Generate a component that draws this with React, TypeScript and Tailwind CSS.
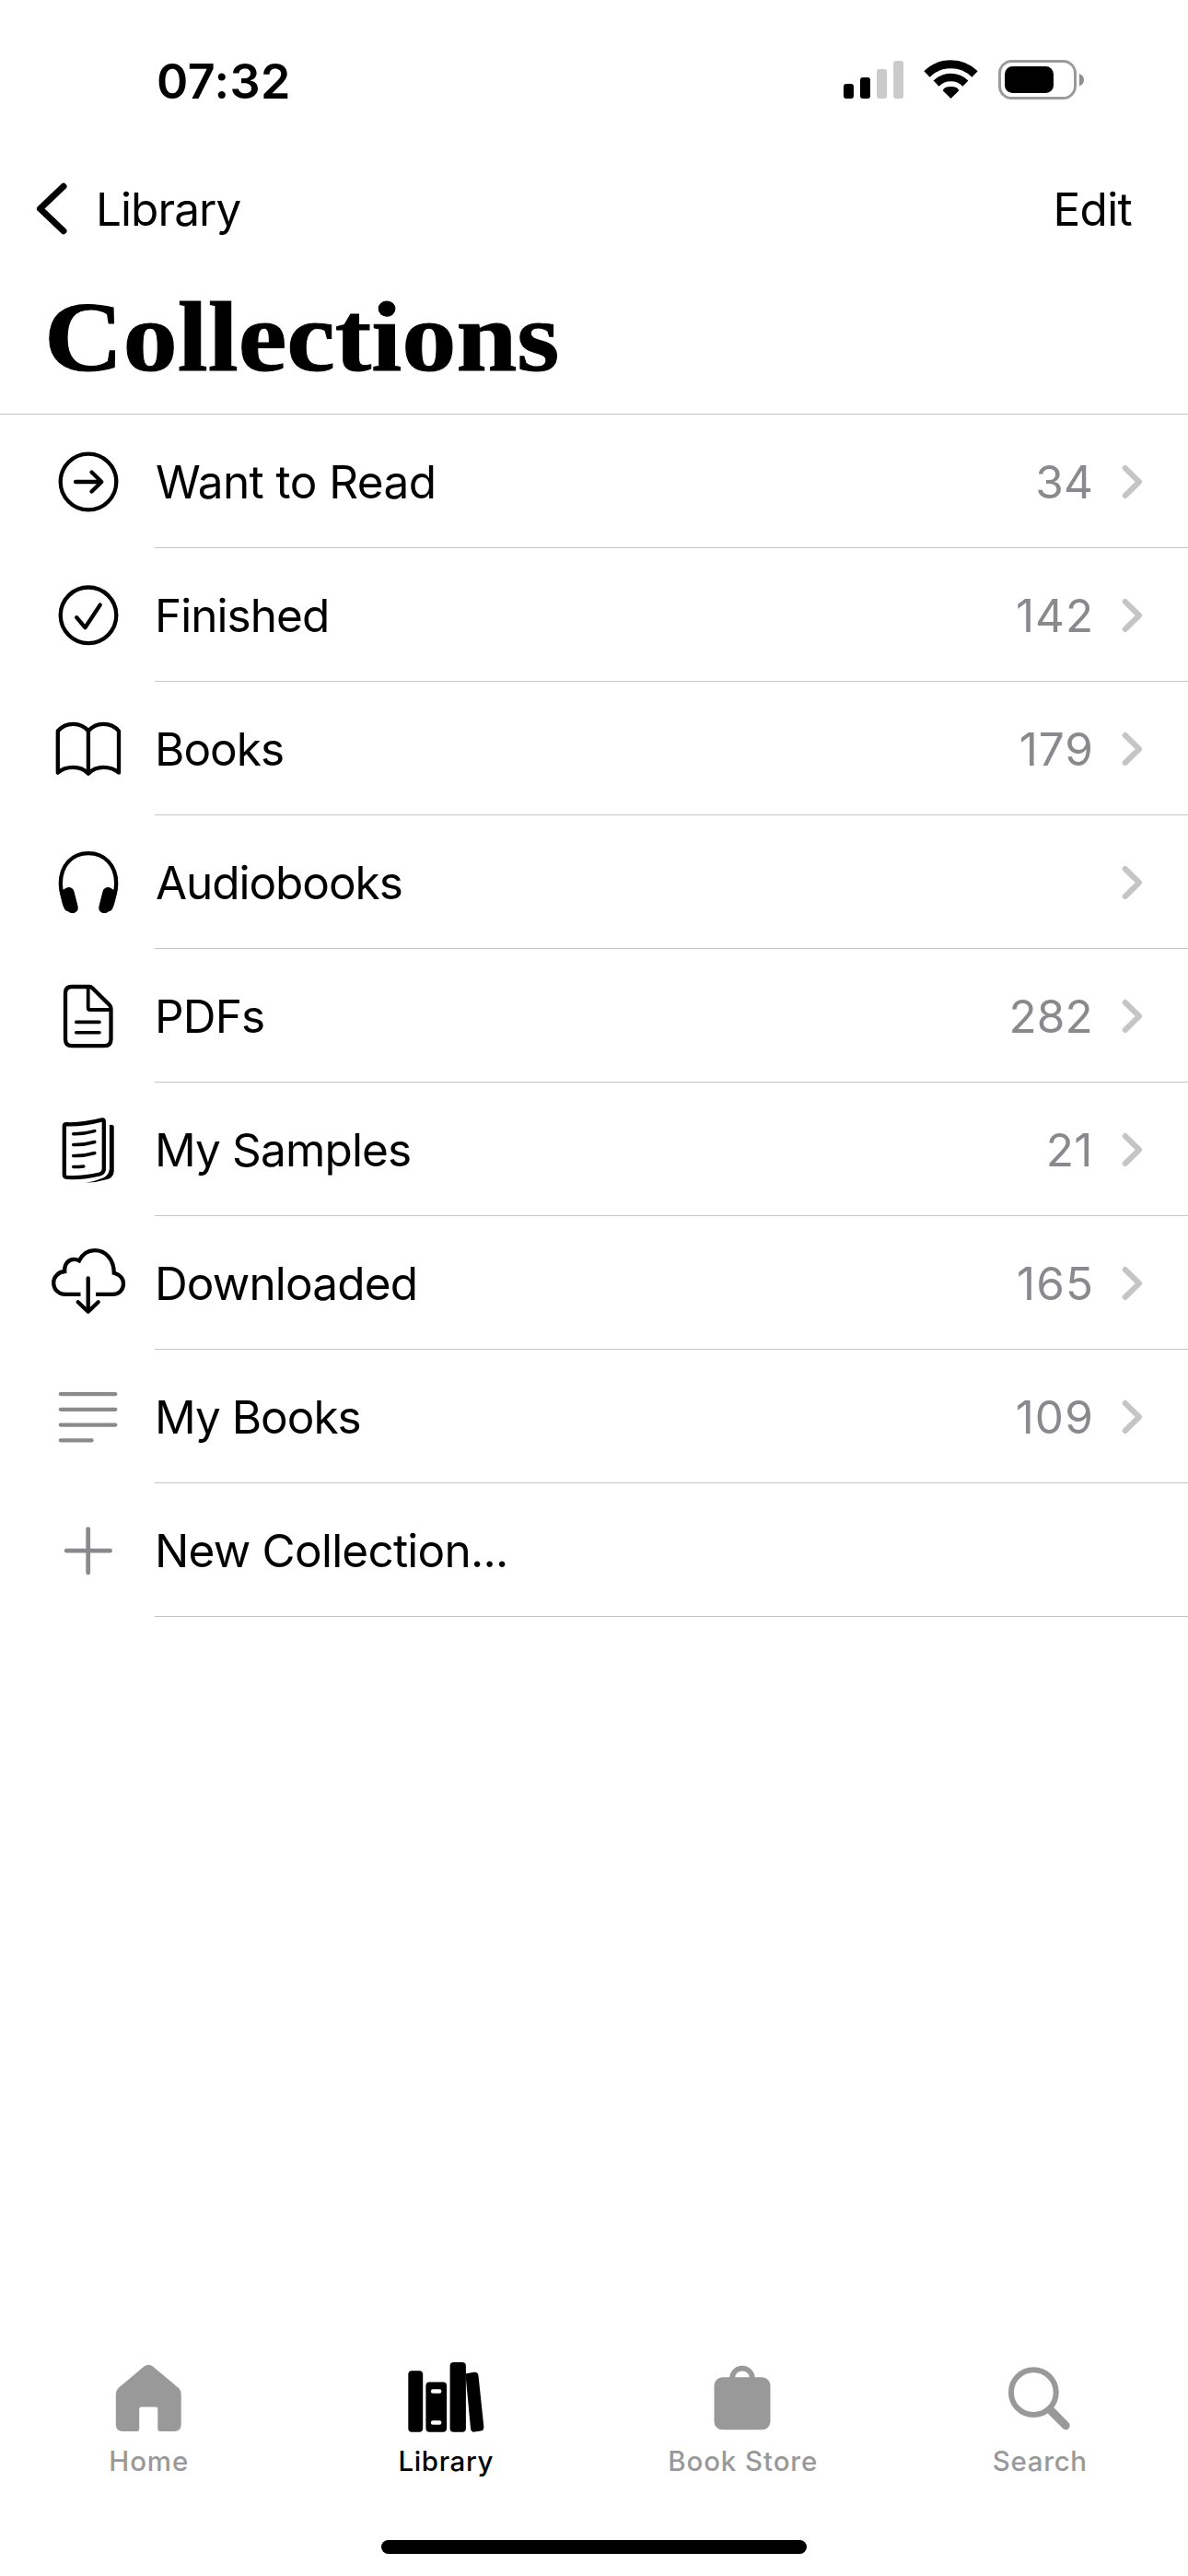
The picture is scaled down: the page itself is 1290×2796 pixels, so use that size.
import type { ReactNode } from "react";

type Row = {
  label: string;
  spacing: string;
  indent: string;
  count?: string;
  countSpacing?: string;
  chevron?: boolean;
  icon: ReactNode;
};

const Stroke = ({ children, color = "#000", width = 4.3 }: { children: ReactNode; color?: string; width?: number }) => (
  <svg
    className="h-[145px] w-[168px] shrink-0"
    viewBox="0 0 168 145"
    fill="none"
    stroke={color}
    strokeWidth={width}
    strokeLinecap="round"
    strokeLinejoin="round"
  >
    {children}
  </svg>
);

const rows: Row[] = [
  {
    label: "Want to Read",
    spacing: "tracking-[-0.57px]",
    indent: "pl-[1px]",
    count: "34",
    countSpacing: "tracking-[0.1px] mr-[1px]",
    chevron: true,
    icon: (
      <Stroke>
        <circle cx="96" cy="73" r="30.3" />
        <path d="M82 73H110M99.5 62.5L110.3 73L99.5 83.5" />
      </Stroke>
    ),
  },
  {
    label: "Finished",
    spacing: "tracking-[-0.96px]",
    indent: "pl-0",
    count: "142",
    countSpacing: "tracking-[0.9px]",
    chevron: true,
    icon: (
      <Stroke>
        <circle cx="96" cy="72.8" r="30.3" />
        <path d="M83.2 75.2L92.4 86.2L108.7 61.6" />
      </Stroke>
    ),
  },
  {
    label: "Books",
    spacing: "tracking-[-0.98px]",
    indent: "pl-0",
    count: "179",
    countSpacing: "tracking-[1px]",
    chevron: true,
    icon: (
      <Stroke>
        <path d="M62.8 98.7V53.5C67 48.6 73 45.8 79.5 45.8S92 48.6 95.9 53.5C100 48.6 105.5 45.8 112.3 45.8S125 48.6 129 53.5V98.7C124.5 95 119 92.9 112.3 92.9S100 95.5 95.9 99.7C92 95.5 86 92.9 79.5 92.9S67 95 62.8 98.7ZM95.9 53.5V99.7" />
      </Stroke>
    ),
  },
  {
    label: "Audiobooks",
    spacing: "tracking-[-1.06px]",
    indent: "pl-[1px]",
    chevron: true,
    icon: (
      <Stroke>
        <path d="M68 88C66.600 83.500 65.800 79 65.800 74C65.800 54 78.500 41.200 96 41.200S126.200 54 126.200 74C126.200 79 125.400 83.500 124 88" />
        <path
          fill="#000"
          stroke="none"
          d="M65.500 80L69.500 80.500C71 79 73 78 75.200 78.100C78 78.300 79.700 80 80.500 82.800L84.500 98.500C85.400 102.500 83.500 105.300 80 106C77.500 106.400 75.500 105.600 74 104.200C72.500 104.200 71 103.300 70 101.500C67.500 96.500 65.500 89 65.500 80ZM126.500 80L122.500 80.500C121 79 119 78 116.800 78.100C114 78.300 112.300 80 111.500 82.800L107.500 98.500C106.600 102.500 108.500 105.300 112 106C114.500 106.400 116.500 105.600 118 104.200C119.500 104.200 121 103.300 122 101.500C124.500 96.500 126.500 89 126.500 80Z"
        />
      </Stroke>
    ),
  },
  {
    label: "PDFs",
    spacing: "tracking-[-0.85px]",
    indent: "pl-0",
    count: "282",
    countSpacing: "tracking-[0.2px] mr-[1px]",
    chevron: true,
    icon: (
      <Stroke>
        <path d="M78 41H97Q99 41 100.400 42.400L118.800 60.800Q120.500 62.500 120.500 65V98Q120.500 105.200 113.500 105.200H78Q71 105.200 71 98V48Q71 41 78 41Z" />
        <path strokeWidth="3.800" d="M95.700 42V64Q95.700 66 97.700 66H119.500" />
        <path strokeWidth="3.600" d="M82.800 79.400H108M82.800 90.700H108" />
      </Stroke>
    ),
  },
  {
    label: "My Samples",
    spacing: "tracking-[-0.86px]",
    indent: "pl-0",
    count: "21",
    countSpacing: "tracking-[0.5px] mr-[1px]",
    chevron: true,
    icon: (
      <Stroke>
        <path d="M72 45.200Q90 46 111 40.400Q112.800 40 112.800 42V94Q112.800 98 108 99.500Q91 103.800 72.500 102.900Q69.800 102.700 69.800 100V47.500Q69.800 45.200 72 45.200Z" />
        <path strokeWidth="3.500" d="M79.700 55.700Q91 56 102.800 52.600M79.700 67.600Q91 67.900 102.800 64.500M79.700 79.600Q91 79.900 102.800 76.500M79.700 91.600Q86 91.600 90.800 90.900" />
        <path
          fill="#000"
          stroke="none"
          d="M118.900 46.300Q119.200 45.700 120.500 45.700Q123.700 45.900 123.700 48V96Q123.500 102.500 117.500 104.800Q106 108.300 93.300 108.800Q103.500 107.300 112.500 103.300Q118.900 100 118.900 92Z"
        />
      </Stroke>
    ),
  },
  {
    label: "Downloaded",
    spacing: "tracking-[-0.85px]",
    indent: "pl-0",
    count: "165",
    countSpacing: "tracking-[1px]",
    chevron: true,
    icon: (
      <Stroke>
        <path
          strokeLinecap="butt"
          strokeLinejoin="miter"
          d="M87.500 84.900H71C63.500 84.900 58.200 79.500 58.200 72.300C58.200 65.800 63.300 60.500 70.200 60C69.800 51.500 74.500 46.900 80.500 46.900C82.500 46.900 84 47.300 86 48.300C89.500 41.200 95.500 37.100 102.800 37.100C114.500 37.100 123.600 46.500 123.800 61.700C130 63.200 134 67.700 134 73.500C134 80.200 128.800 84.900 122.500 84.900H104"
        />
        <path d="M95.700 67.300V103M84.700 93.200L95.700 103.700L106.700 93.200" />
      </Stroke>
    ),
  },
  {
    label: "My Books",
    spacing: "tracking-[-1px]",
    indent: "pl-0",
    count: "109",
    countSpacing: "tracking-[1.1px]",
    chevron: true,
    icon: (
      <Stroke color="#8a8a8e">
        <path d="M65.800 48.100H125.300M65.800 64.800H125.300M65.800 81.600H125.300M65.800 98.300H99.600" />
      </Stroke>
    ),
  },
  {
    label: "New Collection...",
    spacing: "tracking-[-0.77px]",
    indent: "pl-0",
    icon: (
      <Stroke color="#8a8a8e" width={4.8}>
        <path d="M72.200 73.200H119.500M95.700 49.600V97" />
      </Stroke>
    ),
  },
];

const TabIcon = ({ children }: { children: ReactNode }) => (
  <svg className="h-[80px] w-[100px]" viewBox="0 0 100 80" fill="currentColor">
    {children}
  </svg>
);

const tabs = [
  {
    label: "Home",
    style: "text-[#999] tracking-[0.9px]",
    icon: (
      <path d="M45.800 8.200Q50.200 5.200 54.600 8.200L83 32Q85.700 34.600 85.700 38.500V71.500Q85.700 79 78.200 79H62.700Q60.300 79 60.300 76.500V54.800Q60.300 52.600 58 52.600H42.400Q40.200 52.600 40.200 54.800V76.500Q40.200 79 37.800 79H22.300Q14.800 79 14.800 71.500V38.500Q14.800 34.600 17.500 32Z" />
    ),
  },
  {
    label: "Library",
    style: "text-black tracking-[0.63px]",
    icon: (
      <>
        <rect x="9.300" y="13.300" width="15.900" height="66.400" rx="4" />
        <path
          fillRule="evenodd"
          d="M32.500 25.500H46.900Q51.100 25.500 51.100 29.700V75.500Q51.100 79.700 46.900 79.700H32.500Q28.400 79.700 28.400 75.500V29.700Q28.400 25.500 32.500 25.500ZM36.100 33.200A2.250 2.250 0 0 0 36.100 37.700H43.200A2.250 2.250 0 0 0 43.200 33.200ZM36.100 67.200A2.250 2.250 0 0 0 36.100 71.700H43.200A2.250 2.250 0 0 0 43.200 67.200Z"
        />
        <rect x="54.600" y="4" width="17.300" height="75.700" rx="4" />
        <path d="M71.500 16.500L80.500 14.700Q85 14.200 85.500 18.700L91.300 73.500Q91.600 77.700 88 78.600L81.500 79.600Q77.500 80 77 75.700L72.400 27Z" />
      </>
    ),
  },
  {
    label: "Book Store",
    style: "text-[#999] tracking-[0.9px]",
    icon: (
      <>
        <rect x="19.500" y="20.300" width="61" height="57" rx="9" />
        <path d="M39 22V21.600A10.950 10.950 0 0 1 60.900 21.600V22" fill="none" stroke="currentColor" strokeWidth="5.700" />
      </>
    ),
  },
  {
    label: "Search",
    style: "text-[#999] tracking-[0.66px]",
    icon: (
      <>
        <circle cx="43.300" cy="36.700" r="24.400" fill="none" stroke="currentColor" strokeWidth="6" />
        <path d="M61.200 55.500L78.200 72.700" stroke="currentColor" strokeWidth="9" strokeLinecap="round" />
      </>
    ),
  },
];

function StatusBar() {
  return (
    <div className="flex h-[176px] items-center pr-[112px] pl-[170px]">
      <span className="pt-[1px] text-[52px] leading-none font-semibold tracking-[0.46px]">07:32</span>
      <svg className="ml-auto h-[50px] w-[264px]" viewBox="914 63 264 50">
        <rect x="916" y="91" width="11" height="16" rx="3" />
        <rect x="934" y="84" width="11" height="23" rx="3" />
        <rect x="952" y="75" width="11" height="32" rx="3" fill="#cbcbcb" />
        <rect x="970" y="66" width="11" height="41" rx="3" fill="#cbcbcb" />
        <g fill="none" stroke="#000">
          <path strokeWidth="9" d="M1006.500 80.500A36.800 36.800 0 0 1 1058.500 80.500" />
          <path strokeWidth="8.600" d="M1016.600 90.600A22.500 22.500 0 0 1 1048.400 90.600" />
        </g>
        <path d="M1032.500 107L1023.700 98.300Q1025 94 1032.500 94T1041.300 98.300Z" />
        <rect x="1085.500" y="66.500" width="82" height="40" rx="13" fill="none" stroke="#9b9b9b" strokeWidth="3" />
        <rect x="1091" y="72" width="53" height="29" rx="8.500" />
        <path d="M1172 80C1178.700 82.500 1178.700 91 1172 93.500Z" fill="#8e8e8e" />
      </svg>
    </div>
  );
}

export default function App() {
  return (
    <div className="flex h-[2796px] w-[1290px] flex-col overflow-hidden bg-white font-['Inter',sans-serif] text-black">
      <StatusBar />

      <nav className="flex h-[102px] items-center pr-[61px] pl-[36px] text-[49.5px] leading-none">
        <svg className="h-[64px] w-[68px]" viewBox="0 0 68 64" fill="none" stroke="#000" strokeWidth="7" strokeLinecap="round" strokeLinejoin="round">
          <path d="M33 7.300L7.500 31.500L33 55.700" />
        </svg>
        <span className="pt-[2px] tracking-[-0.94px]">Library</span>
        <span className="ml-auto pt-[2px] tracking-[-0.68px]">Edit</span>
      </nav>

      <header className="flex h-[172px] items-center border-b border-[#c6c6c8] pt-[3px] pl-[48px]">
        <h1 className="origin-left scale-x-[1.087] font-['Liberation_Serif',serif] text-[109px] leading-none font-bold [-webkit-text-stroke:1px_#000]">
          Collections
        </h1>
      </header>

      <ul>
        {rows.map((row) => (
          <li key={row.label} className="flex h-[145px] items-center">
            {row.icon}
            <div className={`flex h-full flex-1 items-center border-b border-[#c6c6c8] pt-[2px] pr-[49px] text-[49.5px] leading-none ${row.indent}`}>
              <span className={`pt-[2px] ${row.spacing}`}>{row.label}</span>
              {row.count && <span className={`ml-auto pt-[2px] text-[#8a8a8e] ${row.countSpacing}`}>{row.count}</span>}
              {row.chevron && (
                <svg
                  className={`h-[40px] w-[24px] ${row.count ? "ml-[29px]" : "ml-auto"}`}
                  viewBox="0 0 24 40"
                  fill="none"
                  stroke="#c5c5c7"
                  strokeWidth="6"
                  strokeLinecap="round"
                  strokeLinejoin="round"
                >
                  <path d="M4.700 5L20 20L4.700 35" />
                </svg>
              )}
            </div>
          </li>
        ))}
      </ul>

      <footer className="mt-auto">
        <div className="grid grid-cols-4">
          {tabs.map((tab) => (
            <div key={tab.label} className={`flex flex-col items-center ${tab.style}`}>
              <TabIcon>{tab.icon}</TabIcon>
              <span className="pl-[1px] text-[29.5px] leading-[63px] font-medium">{tab.label}</span>
            </div>
          ))}
        </div>
        <div className="mx-auto mt-[54px] mb-[24px] h-[15px] w-[462px] rounded-full bg-black" />
      </footer>
    </div>
  );
}
